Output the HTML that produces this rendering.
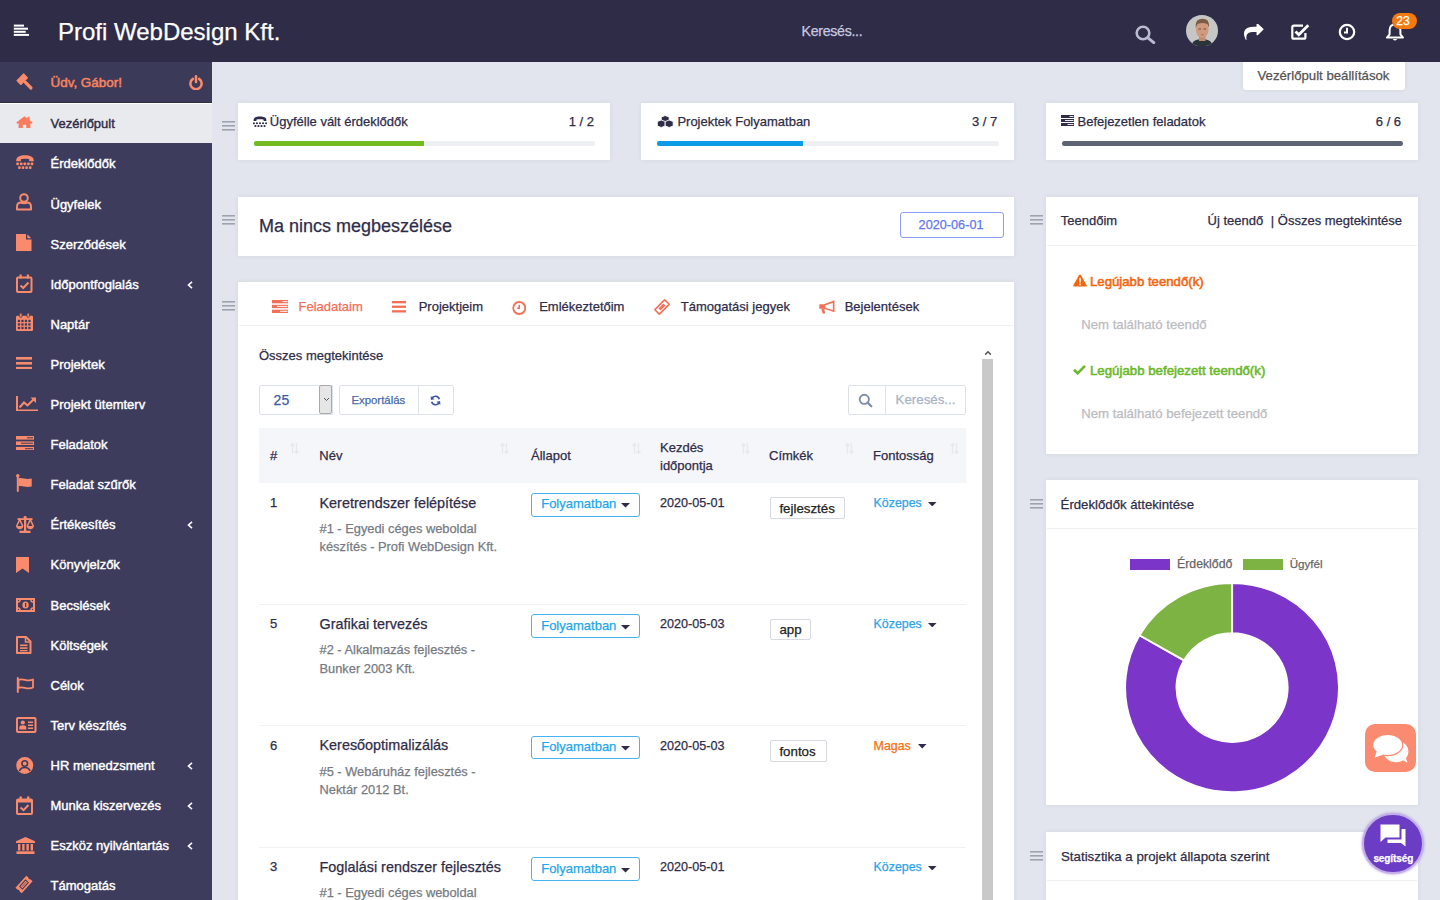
<!DOCTYPE html>
<html><head><meta charset="utf-8">
<style>
*{box-sizing:border-box;margin:0;padding:0}
html,body{width:1440px;height:900px;overflow:hidden}
body{position:relative;background:#e2e5ed;font-family:"Liberation Sans",sans-serif;color:#2f2c48}
.a{position:absolute}
.t{position:absolute;line-height:1;white-space:nowrap;-webkit-text-stroke-width:0.25px}
.sbt{-webkit-text-stroke-width:0.4px}
#hdr{position:absolute;left:0;top:0;width:1440px;height:62px;background:#2f2c48}
#sb{position:absolute;left:0;top:62px;width:212px;height:838px;background:#3d3c5c}
.card{position:absolute;background:#fff;box-shadow:0 0 5px rgba(30,40,60,0.07)}
.si{position:absolute;left:0;width:212px;height:40.1px}
.si .ic{position:absolute;left:15px;top:11px;width:20px;height:18px}
.si .tx{position:absolute;left:50.5px;top:13.5px;font-size:13px;line-height:1;color:#fff;white-space:nowrap;font-weight:400}
.si .ch{position:absolute;left:186px;top:15px;width:6px;height:10px}
</style></head><body>
<div id="hdr">
  <!-- hamburger -->
  <svg class="a" style="left:13px;top:24px" width="17" height="13" viewBox="0 0 17 13"><rect x="0.8" y="0.6" width="10.2" height="2" fill="#fff"/><rect x="0.8" y="3.7" width="14.2" height="2" fill="#fff"/><rect x="0.8" y="6.8" width="11.9" height="2" fill="#fff"/><rect x="0.8" y="9.9" width="15.2" height="2" fill="#fff"/></svg>
  <div class="t" style="left:58px;top:19.7px;font-size:24px;color:#fff">Profi WebDesign Kft.</div>
  <div class="t" style="left:801.5px;top:23.9px;font-size:14.2px;letter-spacing:-0.3px;color:#c7cae0">Keresés...</div>
</div>
<div id="sb"></div>
<!--SB-->
<div class="a" style="left:0;top:62px;width:212px;height:40.5px;background:#3b3a59;border-bottom:1px solid #2e2d47"></div>
<svg class="a" style="left:15.5px;top:73.3px;overflow:visible" width="17" height="17" viewBox="0 0 17 17"><g transform="rotate(-45 8.5 8.5)" fill="#f98a6c"><rect x="3.2" y="2" width="10.6" height="6.6" rx="0.6"/><rect x="6.9" y="8" width="3.2" height="11.2" rx="1.5"/></g></svg>
<div class="t sbt" style="left:50.5px;top:76.3px;font-size:13.45px;color:#f9845f;-webkit-text-stroke-width:0.5px">Üdv, Gábor!</div>
<svg class="a" style="left:189px;top:75px" width="14" height="15" viewBox="0 0 14 15"><path d="M3.9 3.9 A5.6 5.6 0 1 0 10.1 3.9" fill="none" stroke="#f98a6c" stroke-width="2.5" stroke-linecap="round"/><path d="M7 1.3 L7 7" stroke="#f98a6c" stroke-width="2.5" stroke-linecap="round"/></svg>
<div class="a" style="left:0;top:102.8px;width:212px;height:40.2px;background:#e9eaee;border-top:1.5px solid #fff"></div>
<div class="t sbt" style="left:50.5px;top:117.3px;font-size:13px;color:#2f2c48">Vezérlőpult</div>
<svg class="a" style="left:16px;top:115.5px" width="17" height="12.5" viewBox="0 0 17 12.5"><path d="M8.5 0.3 L0.3 6.6 L1.6 8 L2.6 7.2 L2.6 12.5 L6.8 12.5 L6.8 8.8 L10.2 8.8 L10.2 12.5 L14.4 12.5 L14.4 7.2 L15.4 8 L16.7 6.6 L13.5 4.1 L13.5 0.8 L11.4 0.8 L11.4 2.5 Z" fill="#fa7b5e"/></svg>
<div class="t sbt" style="left:50.5px;top:157.4px;font-size:13px;color:#ffffff">Érdeklődők</div>
<svg class="a" style="left:15.9px;top:154.6px" width="18" height="14" viewBox="0 0 18 14"><path d="M0.2 5.6 C0.2 1.5 4 0.2 9 0.2 C14 0.2 17.8 1.5 17.8 5.6 L17.8 6.2 L13.2 6.2 L13.2 4.4 C12 3.6 6 3.6 4.8 4.4 L4.8 6.2 L0.2 6.2 Z" fill="#f98a6c"/><g fill="#f98a6c"><rect x="0.30" y="7.4" width="2.6" height="2.8" rx="0.8"/><rect x="3.90" y="7.4" width="2.6" height="2.8" rx="0.8"/><rect x="7.50" y="7.4" width="2.6" height="2.8" rx="0.8"/><rect x="11.10" y="7.4" width="2.6" height="2.8" rx="0.8"/><rect x="14.70" y="7.4" width="2.6" height="2.8" rx="0.8"/><rect x="2.10" y="11.2" width="2.6" height="2.8" rx="0.8"/><rect x="5.70" y="11.2" width="2.6" height="2.8" rx="0.8"/><rect x="9.30" y="11.2" width="2.6" height="2.8" rx="0.8"/><rect x="12.90" y="11.2" width="2.6" height="2.8" rx="0.8"/></g></svg>
<div class="t sbt" style="left:50.5px;top:197.5px;font-size:13px;color:#ffffff">Ügyfelek</div>
<svg class="a" style="left:16px;top:193px" width="16" height="17.5" viewBox="0 0 16 17.5"><circle cx="8" cy="5" r="3.8" fill="none" stroke="#f98a6c" stroke-width="2"/><path d="M1 16.5 L1 14 C1 11 3 9.6 5 9.6 C6 10.3 10 10.3 11 9.6 C13 9.6 15 11 15 14 L15 16.5 Z" fill="none" stroke="#f98a6c" stroke-width="2" stroke-linejoin="round"/></svg>
<div class="t sbt" style="left:50.5px;top:237.6px;font-size:13px;color:#ffffff">Szerződések</div>
<svg class="a" style="left:16px;top:233.5px" width="15.5" height="17.5" viewBox="0 0 15.5 17.5"><path d="M0 0 L10 0 L10 5.5 L15.5 5.5 L15.5 17.5 L0 17.5 Z" fill="#f98a6c"/><path d="M11.3 0.3 L15.2 4.2 L11.3 4.2 Z" fill="#f98a6c"/></svg>
<div class="t sbt" style="left:50.5px;top:277.7px;font-size:13px;color:#ffffff">Időpontfoglalás</div>
<svg class="a" style="left:16px;top:274px" width="16.5" height="19" viewBox="0 0 16.5 19"><rect x="1" y="3.5" width="14.5" height="14.5" rx="1" fill="none" stroke="#f98a6c" stroke-width="2"/><rect x="3.5" y="0.5" width="2.2" height="4" fill="#f98a6c"/><rect x="10.8" y="0.5" width="2.2" height="4" fill="#f98a6c"/><path d="M4.5 11.5 L7.2 14 L12.5 8.5" fill="none" stroke="#f98a6c" stroke-width="2"/></svg>
<svg class="a" style="left:187px;top:280.5px" width="6" height="8" viewBox="0 0 6 8"><path d="M5 0.8 L1.5 4 L5 7.2" fill="none" stroke="#fff" stroke-width="1.6"/></svg>
<div class="t sbt" style="left:50.5px;top:317.8px;font-size:13px;color:#ffffff">Naptár</div>
<svg class="a" style="left:16px;top:313px" width="17" height="18" viewBox="0 0 17 18"><rect x="0" y="2.8" width="17" height="15.2" rx="1.2" fill="#f98a6c"/><rect x="1.8" y="6.8" width="2.3" height="2.3" fill="#3d3c5c"/><rect x="5.3" y="6.8" width="2.3" height="2.3" fill="#3d3c5c"/><rect x="8.8" y="6.8" width="2.3" height="2.3" fill="#3d3c5c"/><rect x="12.3" y="6.8" width="2.3" height="2.3" fill="#3d3c5c"/><rect x="1.8" y="10.3" width="2.3" height="2.3" fill="#3d3c5c"/><rect x="5.3" y="10.3" width="2.3" height="2.3" fill="#3d3c5c"/><rect x="8.8" y="10.3" width="2.3" height="2.3" fill="#3d3c5c"/><rect x="12.3" y="10.3" width="2.3" height="2.3" fill="#3d3c5c"/><rect x="1.8" y="13.8" width="2.3" height="2.3" fill="#3d3c5c"/><rect x="5.3" y="13.8" width="2.3" height="2.3" fill="#3d3c5c"/><rect x="8.8" y="13.8" width="2.3" height="2.3" fill="#3d3c5c"/><rect x="12.3" y="13.8" width="2.3" height="2.3" fill="#3d3c5c"/><rect x="3.6" y="0" width="2.4" height="4.4" rx="1" fill="#f98a6c" stroke="#3d3c5c" stroke-width="0.8"/><rect x="11" y="0" width="2.4" height="4.4" rx="1" fill="#f98a6c" stroke="#3d3c5c" stroke-width="0.8"/></svg>
<div class="t sbt" style="left:50.5px;top:357.9px;font-size:13px;color:#ffffff">Projektek</div>
<svg class="a" style="left:16px;top:356.5px" width="16" height="12.5" viewBox="0 0 16 12.5"><rect x="0" y="0" width="16" height="2.6" fill="#f98a6c"/><rect x="0" y="5" width="16" height="2.6" fill="#f98a6c"/><rect x="0" y="9.9" width="16" height="2.6" fill="#f98a6c"/></svg>
<div class="t sbt" style="left:50.5px;top:398.0px;font-size:13px;color:#ffffff">Projekt ütemterv</div>
<svg class="a" style="left:16px;top:395.5px" width="22.5" height="15.5" viewBox="0 0 22.5 15.5"><path d="M1 0 L1 14.5 L22 14.5" fill="none" stroke="#f98a6c" stroke-width="2"/><path d="M3.5 11.5 L8 6.5 L11.5 9.5 L18 3" fill="none" stroke="#f98a6c" stroke-width="2"/><path d="M14.5 1.5 L20 1.5 L20 7 Z" fill="#f98a6c"/></svg>
<div class="t sbt" style="left:50.5px;top:438.1px;font-size:13px;color:#ffffff">Feladatok</div>
<svg class="a" style="left:16px;top:435.5px" width="18" height="14.5" viewBox="0 0 18 14.5"><rect x="0" y="0" width="18" height="3.6" fill="#f98a6c"/><rect x="0" y="5.4" width="18" height="3.6" fill="#f98a6c"/><rect x="0" y="10.9" width="18" height="3.6" fill="#f98a6c"/><rect x="11" y="1.3" width="6" height="1" fill="#3d3c5c"/><rect x="5" y="6.7" width="12" height="1" fill="#3d3c5c"/><rect x="9" y="12.2" width="8" height="1" fill="#3d3c5c"/></svg>
<div class="t sbt" style="left:50.5px;top:478.2px;font-size:13px;color:#ffffff">Feladat szűrők</div>
<svg class="a" style="left:16px;top:474.3px" width="16" height="18" viewBox="0 0 16 18"><circle cx="1.8" cy="1.8" r="1.8" fill="#f98a6c"/><rect x="0.8" y="2" width="2" height="16" rx="1" fill="#f98a6c"/><path d="M2.5 4.5 C6 3 9 6 15.7 4.5 L15.7 12.5 C9 14 6 11 2.5 12.5 Z" fill="#f98a6c"/></svg>
<div class="t sbt" style="left:50.5px;top:518.3px;font-size:13px;color:#ffffff">Értékesítés</div>
<svg class="a" style="left:16px;top:515.5px" width="18" height="17" viewBox="0 0 18 17"><rect x="8" y="0.5" width="2.2" height="15" fill="#f98a6c"/><rect x="3.5" y="14.7" width="11" height="2.3" fill="#f98a6c"/><rect x="1.5" y="2.2" width="15" height="1.8" fill="#f98a6c"/><circle cx="9.1" cy="1.6" r="1.6" fill="#f98a6c"/><path d="M0.6 10.3 L3.7 3.6 L6.8 10.3" fill="none" stroke="#f98a6c" stroke-width="1.5"/><path d="M11.2 10.3 L14.3 3.6 L17.4 10.3" fill="none" stroke="#f98a6c" stroke-width="1.5"/><path d="M0 10 L7.4 10 Q6.5 13.2 3.7 13.2 Q0.9 13.2 0 10 Z M10.6 10 L18 10 Q17.1 13.2 14.3 13.2 Q11.5 13.2 10.6 10 Z" fill="#f98a6c"/></svg>
<svg class="a" style="left:187px;top:521.1px" width="6" height="8" viewBox="0 0 6 8"><path d="M5 0.8 L1.5 4 L5 7.2" fill="none" stroke="#fff" stroke-width="1.6"/></svg>
<div class="t sbt" style="left:50.5px;top:558.4px;font-size:13px;color:#ffffff">Könyvjelzők</div>
<svg class="a" style="left:16px;top:556.5px" width="13" height="16" viewBox="0 0 13 16"><path d="M0 0 L13 0 L13 16 L6.5 11.5 L0 16 Z" fill="#f98a6c"/></svg>
<div class="t sbt" style="left:50.5px;top:598.5px;font-size:13px;color:#ffffff">Becslések</div>
<svg class="a" style="left:16px;top:597.5px" width="19" height="14" viewBox="0 0 19 14"><rect x="1" y="1" width="17" height="12" fill="none" stroke="#f98a6c" stroke-width="2"/><ellipse cx="9.5" cy="7" rx="3.2" ry="3.6" fill="#f98a6c"/><rect x="9" y="5" width="1.2" height="4" fill="#3d3c5c"/><path d="M2 4 Q4 4 4 2 M15 2 Q15 4 17 4 M2 10 Q4 10 4 12 M15 12 Q15 10 17 10" fill="none" stroke="#f98a6c" stroke-width="1.5"/></svg>
<div class="t sbt" style="left:50.5px;top:638.6px;font-size:13px;color:#ffffff">Költségek</div>
<svg class="a" style="left:16px;top:635.5px" width="15.5" height="18" viewBox="0 0 15.5 18"><path d="M1 1 L10 1 L14.5 5.5 L14.5 17 L1 17 Z" fill="none" stroke="#f98a6c" stroke-width="2" stroke-linejoin="round"/><path d="M9.5 1 L9.5 6 L14.5 6" fill="none" stroke="#f98a6c" stroke-width="1.5"/><rect x="4" y="8.5" width="7.5" height="1.6" fill="#f98a6c"/><rect x="4" y="11.3" width="7.5" height="1.6" fill="#f98a6c"/><rect x="4" y="14" width="7.5" height="1.3" fill="#f98a6c"/></svg>
<div class="t sbt" style="left:50.5px;top:678.7px;font-size:13px;color:#ffffff">Célok</div>
<svg class="a" style="left:16px;top:676.5px" width="18" height="16" viewBox="0 0 18 16"><rect x="0.8" y="0" width="2" height="16" rx="1" fill="#f98a6c"/><path d="M2.5 3 C7 0.5 11 5.5 17 2.5 L17 10.5 C11 13.5 7 8.5 2.5 11 Z" fill="none" stroke="#f98a6c" stroke-width="1.8" stroke-linejoin="round"/></svg>
<div class="t sbt" style="left:50.5px;top:718.8px;font-size:13px;color:#ffffff">Terv készítés</div>
<svg class="a" style="left:16px;top:716.5px" width="20.5" height="16" viewBox="0 0 20.5 16"><rect x="1" y="1" width="18.5" height="14" rx="1" fill="none" stroke="#f98a6c" stroke-width="2"/><circle cx="6.8" cy="5.5" r="2.1" fill="#f98a6c"/><path d="M3.3 12.5 L3.3 10.5 Q3.3 8.2 6.8 8.2 Q10.3 8.2 10.3 10.5 L10.3 12.5 Z" fill="#f98a6c"/><rect x="12" y="4.5" width="5" height="1.5" fill="#f98a6c"/><rect x="12" y="7.5" width="5" height="1.5" fill="#f98a6c"/><rect x="12" y="10.5" width="5" height="1.5" fill="#f98a6c"/></svg>
<div class="t sbt" style="left:50.5px;top:758.9px;font-size:13px;color:#ffffff">HR menedzsment</div>
<svg class="a" style="left:16px;top:756.5px" width="17.5" height="17" viewBox="0 0 17.5 17"><circle cx="8.75" cy="8.5" r="8.5" fill="#f98a6c"/><circle cx="8.75" cy="6.5" r="2.8" fill="none" stroke="#3d3c5c" stroke-width="1.6"/><path d="M3.5 14 Q4.5 10.5 8.75 10.5 Q13 10.5 14 14" fill="none" stroke="#3d3c5c" stroke-width="1.6"/></svg>
<svg class="a" style="left:187px;top:761.7px" width="6" height="8" viewBox="0 0 6 8"><path d="M5 0.8 L1.5 4 L5 7.2" fill="none" stroke="#fff" stroke-width="1.6"/></svg>
<div class="t sbt" style="left:50.5px;top:799.0px;font-size:13px;color:#ffffff">Munka kiszervezés</div>
<svg class="a" style="left:16px;top:795.5px" width="17" height="19" viewBox="0 0 17 19"><rect x="1" y="3.5" width="15" height="14.5" rx="1" fill="none" stroke="#f98a6c" stroke-width="2"/><rect x="1" y="3.5" width="15" height="3" fill="#f98a6c"/><rect x="3.5" y="0.3" width="2.4" height="4.2" rx="1" fill="#f98a6c"/><rect x="11" y="0.3" width="2.4" height="4.2" rx="1" fill="#f98a6c"/><path d="M4.5 11.5 L7.5 14.2 L12.5 9" fill="none" stroke="#f98a6c" stroke-width="2"/></svg>
<svg class="a" style="left:187px;top:801.8px" width="6" height="8" viewBox="0 0 6 8"><path d="M5 0.8 L1.5 4 L5 7.2" fill="none" stroke="#fff" stroke-width="1.6"/></svg>
<div class="t sbt" style="left:50.5px;top:839.1px;font-size:13px;color:#ffffff">Eszköz nyilvántartás</div>
<svg class="a" style="left:16px;top:836.5px" width="19" height="17" viewBox="0 0 19 17"><path d="M0 4.3 L9.5 0 L19 4.3 L19 6 L0 6 Z" fill="#f98a6c"/><rect x="2" y="7" width="2.4" height="6.5" fill="#f98a6c"/><rect x="6.2" y="7" width="2.4" height="6.5" fill="#f98a6c"/><rect x="10.4" y="7" width="2.4" height="6.5" fill="#f98a6c"/><rect x="14.6" y="7" width="2.4" height="6.5" fill="#f98a6c"/><rect x="0.5" y="14.3" width="18" height="2.7" fill="#f98a6c"/></svg>
<svg class="a" style="left:187px;top:841.9px" width="6" height="8" viewBox="0 0 6 8"><path d="M5 0.8 L1.5 4 L5 7.2" fill="none" stroke="#fff" stroke-width="1.6"/></svg>
<div class="t sbt" style="left:50.5px;top:879.2px;font-size:13px;color:#ffffff">Támogatás</div>
<svg class="a" style="left:15px;top:875.5px;overflow:visible" width="18" height="17" viewBox="0 0 20 17"><g transform="rotate(-48 10 8.5)"><path d="M1 3.8 L19 3.8 L19 6.6 Q17.3 8.5 19 10.4 L19 13.2 L1 13.2 L1 10.4 Q2.7 8.5 1 6.6 Z" fill="#f98a6c"/><rect x="5.2" y="6.4" width="9.6" height="4.2" fill="none" stroke="#3d3c5c" stroke-width="1.1"/><rect x="6.6" y="7.6" width="6.8" height="1.8" fill="#3d3c5c" opacity="0.35"/></g></svg>
<!--/SB-->
<!--M1-->
<!-- handles -->
<svg class="a" style="left:222px;top:119.5px" width="13" height="12" viewBox="0 0 13 12"><rect y="1" width="13" height="1.6" fill="#9ea3af"/><rect y="5" width="13" height="1.6" fill="#9ea3af"/><rect y="9" width="13" height="1.6" fill="#9ea3af"/></svg>
<svg class="a" style="left:222px;top:213.5px" width="13" height="12" viewBox="0 0 13 12"><rect y="1" width="13" height="1.6" fill="#9ea3af"/><rect y="5" width="13" height="1.6" fill="#9ea3af"/><rect y="9" width="13" height="1.6" fill="#9ea3af"/></svg>
<svg class="a" style="left:222px;top:299.5px" width="13" height="12" viewBox="0 0 13 12"><rect y="1" width="13" height="1.6" fill="#9ea3af"/><rect y="5" width="13" height="1.6" fill="#9ea3af"/><rect y="9" width="13" height="1.6" fill="#9ea3af"/></svg>
<svg class="a" style="left:1030px;top:213.5px" width="13" height="12" viewBox="0 0 13 12"><rect y="1" width="13" height="1.6" fill="#9ea3af"/><rect y="5" width="13" height="1.6" fill="#9ea3af"/><rect y="9" width="13" height="1.6" fill="#9ea3af"/></svg>
<svg class="a" style="left:1030px;top:497.5px" width="13" height="12" viewBox="0 0 13 12"><rect y="1" width="13" height="1.6" fill="#9ea3af"/><rect y="5" width="13" height="1.6" fill="#9ea3af"/><rect y="9" width="13" height="1.6" fill="#9ea3af"/></svg>
<svg class="a" style="left:1030px;top:849.5px" width="13" height="12" viewBox="0 0 13 12"><rect y="1" width="13" height="1.6" fill="#9ea3af"/><rect y="5" width="13" height="1.6" fill="#9ea3af"/><rect y="9" width="13" height="1.6" fill="#9ea3af"/></svg>

<!-- settings button -->
<div class="a card" style="left:1242.5px;top:62px;width:162.5px;height:27.6px;border-radius:0 0 3px 3px"></div>
<div class="t" style="left:1257.5px;top:68.6px;font-size:13.2px;color:#535353">Vezérlőpult beállítások</div>

<!-- stat cards -->
<div class="a card" style="left:238.3px;top:102.5px;width:371.5px;height:57.7px"></div>
<div class="a card" style="left:641.3px;top:102.5px;width:373px;height:57.7px"></div>
<div class="a card" style="left:1046.2px;top:102.5px;width:371.6px;height:57.7px"></div>

<div class="t" style="left:269.8px;top:115px;font-size:13px;color:#2f2c48">Ügyfélle vált érdeklődők</div>
<div class="t" style="left:568.7px;top:115px;font-size:13px;color:#2f2c48">1 / 2</div>
<div class="a" style="left:253.7px;top:141.2px;width:341px;height:4.4px;background:#eff0f3;border-radius:2px"></div>
<div class="a" style="left:253.7px;top:141.2px;width:170px;height:4.4px;background:#74bb22;border-radius:2px 0 0 2px"></div>

<div class="t" style="left:677.4px;top:115px;font-size:13px;color:#2f2c48">Projektek Folyamatban</div>
<div class="t" style="left:972px;top:115px;font-size:13px;color:#2f2c48">3 / 7</div>
<div class="a" style="left:657.3px;top:141.2px;width:341.7px;height:4.4px;background:#eff0f3;border-radius:2px"></div>
<div class="a" style="left:657.3px;top:141.2px;width:146px;height:4.4px;background:#0b9ce8;border-radius:2px 0 0 2px"></div>

<div class="t" style="left:1077.5px;top:115px;font-size:13px;color:#2f2c48">Befejezetlen feladatok</div>
<div class="t" style="left:1375.8px;top:115px;font-size:13px;color:#2f2c48">6 / 6</div>
<div class="a" style="left:1061.7px;top:141px;width:341px;height:4.6px;background:#5f6475;border-radius:2.3px"></div>

<!-- meeting card -->
<div class="a card" style="left:238.3px;top:196.5px;width:776px;height:59.5px"></div>
<div class="t" style="left:259px;top:217.3px;font-size:18px;color:#2f2c48">Ma nincs megbeszélése</div>
<div class="a" style="left:900px;top:212px;width:103.5px;height:25.5px;border:1.5px solid #8d9df4;border-radius:3px"></div>
<div class="t" style="left:918.6px;top:219px;font-size:12.7px;color:#6078ea">2020-06-01</div>

<!-- todo card -->
<div class="a card" style="left:1046.3px;top:196.5px;width:371.7px;height:257px"></div>
<div class="a" style="left:1047px;top:245px;width:370px;height:1px;background:#eef0f3"></div>
<div class="t" style="left:1060.8px;top:214px;font-size:13px;color:#2f2c48">Teendőim</div>
<div class="t" style="left:1207.5px;top:214px;font-size:13px;color:#2f2c48">Új teendő</div>
<div class="t" style="left:1270.8px;top:214px;font-size:13px;color:#2f2c48">| Összes megtekintése</div>

<!--/M1-->
<!--M2-->
<!-- task panel -->
<div class="a card" style="left:238.3px;top:282.2px;width:776px;height:640px"></div>
<div class="a" style="left:239px;top:325px;width:774px;height:1px;background:#eef0f3"></div>
<!-- tabs -->
<svg class="a" style="left:271.5px;top:299.8px" width="16.5" height="13" viewBox="0 0 16.5 13"><rect x="0" y="0" width="16.5" height="3.3" fill="#f36f56"/><rect x="0" y="4.8" width="16.5" height="3.3" fill="#f36f56"/><rect x="0" y="9.7" width="16.5" height="3.3" fill="#f36f56"/><rect x="10.5" y="1.1" width="5" height="1" fill="#fff"/><rect x="5" y="5.9" width="10.5" height="1" fill="#fff"/><rect x="8" y="10.8" width="7.5" height="1" fill="#fff"/></svg>
<div class="t" style="left:298.5px;top:300px;font-size:13px;color:#f36f56">Feladataim</div>
<svg class="a" style="left:391.8px;top:301px" width="14" height="11.5" viewBox="0 0 14 11.5"><rect x="0" y="0" width="14" height="2.3" fill="#f36f56"/><rect x="0" y="4.6" width="14" height="2.3" fill="#f36f56"/><rect x="0" y="9.2" width="14" height="2.3" fill="#f36f56"/></svg>
<div class="t" style="left:418.7px;top:300px;font-size:13px;color:#2f2c48">Projektjeim</div>
<svg class="a" style="left:511.8px;top:300.6px" width="14.5" height="14" viewBox="0 0 14.5 14"><circle cx="7.25" cy="7" r="6" fill="none" stroke="#f36f56" stroke-width="1.8"/><path d="M7.25 3.8 L7.25 7.3 L5 7.3" fill="none" stroke="#f36f56" stroke-width="1.6"/></svg>
<div class="t" style="left:539.2px;top:300px;font-size:13px;color:#2f2c48">Emlékeztetőim</div>
<svg class="a" style="left:654px;top:298.5px" width="16" height="16" viewBox="0 0 16 16"><g transform="rotate(-45 8 8)"><rect x="1" y="4.8" width="14" height="6.4" rx="0.5" fill="none" stroke="#f36f56" stroke-width="1.6"/><rect x="4.5" y="6.6" width="7" height="2.8" fill="#f36f56"/></g></svg>
<div class="t" style="left:680.8px;top:300px;font-size:13px;color:#2f2c48">Támogatási jegyek</div>
<svg class="a" style="left:818.5px;top:300px" width="16.5" height="14" viewBox="0 0 16.5 14"><path d="M0.3 4.3 L5 4.3 L15.5 0.3 L15.5 12.3 L5 8.8 L0.3 8.8 Z" fill="#f36f56"/><path d="M6.3 5.4 L13.8 2.7 L13.8 9.9 L6.3 7.7 Z" fill="#fff"/><path d="M2.2 8.5 L3.6 13.6 L6.2 13.6 L5.3 8.7 Z" fill="#f36f56"/></svg>
<div class="t" style="left:844.7px;top:300px;font-size:13px;color:#2f2c48">Bejelentések</div>

<!-- toolbar -->
<div class="t" style="left:259px;top:349.4px;font-size:13px;color:#2f2c48">Összes megtekintése</div>
<div class="a" style="left:259px;top:384.6px;width:74px;height:30.2px;border:1px solid #dde2ea;border-radius:2px 0 0 2px;background:#fff"></div>
<div class="a" style="left:319.4px;top:385.4px;width:13px;height:28.6px;background:#e6e6e6;border:1px solid #a9a9a9;border-radius:2px"></div>
<svg class="a" style="left:322.5px;top:397px" width="7" height="5" viewBox="0 0 7 5"><path d="M1 1 L3.5 3.5 L6 1" fill="none" stroke="#555" stroke-width="1"/></svg>
<div class="t" style="left:273.6px;top:393.2px;font-size:14px;color:#3d5a9e">25</div>
<div class="a" style="left:338.6px;top:384.6px;width:115px;height:30.2px;border:1px solid #dde2ea;border-radius:2px;background:#fff"></div>
<div class="a" style="left:418.3px;top:385px;width:1px;height:29.4px;background:#dde2ea"></div>
<div class="t" style="left:351.4px;top:395px;font-size:11.4px;color:#4a6aa5">Exportálás</div>
<svg class="a" style="left:429.5px;top:395px" width="11" height="11" viewBox="0 0 11 11"><path d="M9.3 4.2 A4 4 0 0 0 1.8 3.6" fill="none" stroke="#3d5a9e" stroke-width="1.7"/><path d="M0.6 1 L0.9 5 L4.6 4.3 Z" fill="#3d5a9e"/><path d="M1.7 6.8 A4 4 0 0 0 9.2 7.4" fill="none" stroke="#3d5a9e" stroke-width="1.7"/><path d="M10.4 10 L10.1 6 L6.4 6.7 Z" fill="#3d5a9e"/></svg>
<div class="a" style="left:847.5px;top:384.6px;width:118.2px;height:30.2px;border:1px solid #dde2ea;border-radius:2px;background:#fff"></div>
<div class="a" style="left:884.5px;top:385px;width:1px;height:29.4px;background:#dde2ea"></div>
<svg class="a" style="left:858px;top:392.5px" width="15" height="15" viewBox="0 0 15 15"><circle cx="6.3" cy="6.3" r="4.6" fill="none" stroke="#7e8ea8" stroke-width="1.9"/><path d="M9.6 9.6 L13.3 13.3" stroke="#7e8ea8" stroke-width="2.2" stroke-linecap="round"/></svg>
<div class="t" style="left:895.6px;top:393.2px;font-size:13.3px;color:#a8b3c6">Keresés...</div>

<!-- scrollbar -->
<div class="a" style="left:982px;top:345px;width:11.4px;height:560px;background:#fff"></div>
<div class="a" style="left:982.2px;top:359px;width:11px;height:545px;background:#c9c9c9"></div>
<svg class="a" style="left:983.7px;top:350.3px" width="8" height="6" viewBox="0 0 8 6"><path d="M1.2 4.6 L4 1.8 L6.8 4.6" fill="none" stroke="#555" stroke-width="1.5"/></svg>

<!-- table header -->
<div class="a" style="left:259px;top:428px;width:706.7px;height:55px;background:#f5f6f9"></div>
<svg class="a" style="left:289.5px;top:442px" width="9" height="13" viewBox="0 0 9 13"><path d="M2.5 12 L2.5 2 M0.5 4 L2.5 1.5 L4.5 4" fill="none" stroke="#e6e8ee" stroke-width="1.3"/><path d="M6.5 1 L6.5 11 M4.5 9 L6.5 11.5 L8.5 9" fill="none" stroke="#e6e8ee" stroke-width="1.3"/></svg><svg class="a" style="left:500px;top:442px" width="9" height="13" viewBox="0 0 9 13"><path d="M2.5 12 L2.5 2 M0.5 4 L2.5 1.5 L4.5 4" fill="none" stroke="#e6e8ee" stroke-width="1.3"/><path d="M6.5 1 L6.5 11 M4.5 9 L6.5 11.5 L8.5 9" fill="none" stroke="#e6e8ee" stroke-width="1.3"/></svg><svg class="a" style="left:632px;top:442px" width="9" height="13" viewBox="0 0 9 13"><path d="M2.5 12 L2.5 2 M0.5 4 L2.5 1.5 L4.5 4" fill="none" stroke="#e6e8ee" stroke-width="1.3"/><path d="M6.5 1 L6.5 11 M4.5 9 L6.5 11.5 L8.5 9" fill="none" stroke="#e6e8ee" stroke-width="1.3"/></svg><svg class="a" style="left:741px;top:442px" width="9" height="13" viewBox="0 0 9 13"><path d="M2.5 12 L2.5 2 M0.5 4 L2.5 1.5 L4.5 4" fill="none" stroke="#e6e8ee" stroke-width="1.3"/><path d="M6.5 1 L6.5 11 M4.5 9 L6.5 11.5 L8.5 9" fill="none" stroke="#e6e8ee" stroke-width="1.3"/></svg><svg class="a" style="left:845px;top:442px" width="9" height="13" viewBox="0 0 9 13"><path d="M2.5 12 L2.5 2 M0.5 4 L2.5 1.5 L4.5 4" fill="none" stroke="#e6e8ee" stroke-width="1.3"/><path d="M6.5 1 L6.5 11 M4.5 9 L6.5 11.5 L8.5 9" fill="none" stroke="#e6e8ee" stroke-width="1.3"/></svg><svg class="a" style="left:950px;top:442px" width="9" height="13" viewBox="0 0 9 13"><path d="M2.5 12 L2.5 2 M0.5 4 L2.5 1.5 L4.5 4" fill="none" stroke="#e6e8ee" stroke-width="1.3"/><path d="M6.5 1 L6.5 11 M4.5 9 L6.5 11.5 L8.5 9" fill="none" stroke="#e6e8ee" stroke-width="1.3"/></svg>
<div class="t" style="left:270px;top:449.2px;font-size:13px;color:#2f2c48">#</div>
<div class="t" style="left:319.3px;top:449.2px;font-size:13px;color:#2f2c48">Név</div>
<div class="t" style="left:531px;top:449.2px;font-size:13px;color:#2f2c48">Állapot</div>
<div class="t" style="left:660px;top:440.7px;font-size:13px;color:#2f2c48">Kezdés</div>
<div class="t" style="left:660px;top:459.1px;font-size:13px;color:#2f2c48">időpontja</div>
<div class="t" style="left:769px;top:449.2px;font-size:13px;color:#2f2c48">Címkék</div>
<div class="t" style="left:873px;top:449.2px;font-size:13px;color:#2f2c48">Fontosság</div>

<div class="t" style="left:270px;top:496.0px;font-size:13px;color:#2f2c48">1</div>
<div class="t" style="left:319.5px;top:495.6px;font-size:14.4px;color:#2f2c48">Keretrendszer felépítése</div>
<div class="t" style="left:319.5px;top:522.8px;font-size:12.85px;color:#777a82">#1 - Egyedi céges weboldal</div>
<div class="t" style="left:319.5px;top:541.3px;font-size:12.85px;color:#777a82">készítés - Profi WebDesign Kft.</div>
<div class="a" style="left:531.2px;top:493.0px;width:108.5px;height:23.7px;border:1px solid #45b4f0;border-radius:3px"></div>
<div class="t" style="left:541.2px;top:497.3px;font-size:13px;color:#1ea6ec">Folyamatban</div>
<svg class="a" style="left:621.3px;top:503.3px" width="9" height="5" viewBox="0 0 9 5"><path d="M0 0 L9 0 L4.5 4.6 Z" fill="#2f2c48"/></svg>
<div class="t" style="left:660px;top:497.0px;font-size:12.6px;color:#2f2c48">2020-05-01</div>
<div class="a" style="left:769.6px;top:497.3px;width:75px;height:21.5px;border:1px solid #d6d9df;border-radius:2px"></div>
<div class="t" style="left:779.4px;top:501.8px;font-size:13.3px;color:#222">fejlesztés</div>
<div class="t" style="left:873.6px;top:497.0px;font-size:12.4px;color:#2ba4e8">Közepes</div>
<svg class="a" style="left:928px;top:501.5px" width="8.5" height="4.5" viewBox="0 0 8.5 4.5"><path d="M0 0 L8.5 0 L4.25 4.4 Z" fill="#2f2c48"/></svg>
<div class="a" style="left:259px;top:603.7px;width:706.7px;height:1px;background:#f0f1f4"></div>
<div class="t" style="left:270px;top:617.4px;font-size:13px;color:#2f2c48">5</div>
<div class="t" style="left:319.5px;top:617.0px;font-size:14.4px;color:#2f2c48">Grafikai tervezés</div>
<div class="t" style="left:319.5px;top:644.2px;font-size:12.85px;color:#777a82">#2 - Alkalmazás fejlesztés -</div>
<div class="t" style="left:319.5px;top:662.7px;font-size:12.85px;color:#777a82">Bunker 2003 Kft.</div>
<div class="a" style="left:531.2px;top:614.4px;width:108.5px;height:23.7px;border:1px solid #45b4f0;border-radius:3px"></div>
<div class="t" style="left:541.2px;top:618.7px;font-size:13px;color:#1ea6ec">Folyamatban</div>
<svg class="a" style="left:621.3px;top:624.7px" width="9" height="5" viewBox="0 0 9 5"><path d="M0 0 L9 0 L4.5 4.6 Z" fill="#2f2c48"/></svg>
<div class="t" style="left:660px;top:618.4px;font-size:12.6px;color:#2f2c48">2020-05-03</div>
<div class="a" style="left:769.6px;top:618.7px;width:41.4px;height:21.5px;border:1px solid #d6d9df;border-radius:2px"></div>
<div class="t" style="left:779.4px;top:623.2px;font-size:13.3px;color:#222">app</div>
<div class="t" style="left:873.6px;top:618.4px;font-size:12.4px;color:#2ba4e8">Közepes</div>
<svg class="a" style="left:928px;top:622.9px" width="8.5" height="4.5" viewBox="0 0 8.5 4.5"><path d="M0 0 L8.5 0 L4.25 4.4 Z" fill="#2f2c48"/></svg>
<div class="a" style="left:259px;top:725.1px;width:706.7px;height:1px;background:#f0f1f4"></div>
<div class="t" style="left:270px;top:738.8px;font-size:13px;color:#2f2c48">6</div>
<div class="t" style="left:319.5px;top:738.4px;font-size:14.4px;color:#2f2c48">Keresőoptimalizálás</div>
<div class="t" style="left:319.5px;top:765.6px;font-size:12.85px;color:#777a82">#5 - Webáruház fejlesztés -</div>
<div class="t" style="left:319.5px;top:784.1px;font-size:12.85px;color:#777a82">Nektár 2012 Bt.</div>
<div class="a" style="left:531.2px;top:735.8px;width:108.5px;height:23.7px;border:1px solid #45b4f0;border-radius:3px"></div>
<div class="t" style="left:541.2px;top:740.1px;font-size:13px;color:#1ea6ec">Folyamatban</div>
<svg class="a" style="left:621.3px;top:746.1px" width="9" height="5" viewBox="0 0 9 5"><path d="M0 0 L9 0 L4.5 4.6 Z" fill="#2f2c48"/></svg>
<div class="t" style="left:660px;top:739.8px;font-size:12.6px;color:#2f2c48">2020-05-03</div>
<div class="a" style="left:769.6px;top:740.1px;width:57.4px;height:21.5px;border:1px solid #d6d9df;border-radius:2px"></div>
<div class="t" style="left:779.4px;top:744.6px;font-size:13.3px;color:#222">fontos</div>
<div class="t" style="left:873.6px;top:739.8px;font-size:12.4px;color:#f5700e">Magas</div>
<svg class="a" style="left:918px;top:744.3px" width="8.5" height="4.5" viewBox="0 0 8.5 4.5"><path d="M0 0 L8.5 0 L4.25 4.4 Z" fill="#2f2c48"/></svg>
<div class="a" style="left:259px;top:846.5px;width:706.7px;height:1px;background:#f0f1f4"></div>
<div class="t" style="left:270px;top:860.2px;font-size:13px;color:#2f2c48">3</div>
<div class="t" style="left:319.5px;top:859.8px;font-size:14.4px;color:#2f2c48">Foglalási rendszer fejlesztés</div>
<div class="t" style="left:319.5px;top:887.0px;font-size:12.85px;color:#777a82">#1 - Egyedi céges weboldal</div>
<div class="a" style="left:531.2px;top:857.2px;width:108.5px;height:23.7px;border:1px solid #45b4f0;border-radius:3px"></div>
<div class="t" style="left:541.2px;top:861.5px;font-size:13px;color:#1ea6ec">Folyamatban</div>
<svg class="a" style="left:621.3px;top:867.5px" width="9" height="5" viewBox="0 0 9 5"><path d="M0 0 L9 0 L4.5 4.6 Z" fill="#2f2c48"/></svg>
<div class="t" style="left:660px;top:861.2px;font-size:12.6px;color:#2f2c48">2020-05-01</div>
<div class="t" style="left:873.6px;top:861.2px;font-size:12.4px;color:#2ba4e8">Közepes</div>
<svg class="a" style="left:928px;top:865.7px" width="8.5" height="4.5" viewBox="0 0 8.5 4.5"><path d="M0 0 L8.5 0 L4.25 4.4 Z" fill="#2f2c48"/></svg>
<!--/M2-->
<!--M3-->
<!-- todo content -->
<svg class="a" style="left:1072.5px;top:273.5px" width="14" height="13" viewBox="0 0 14 13"><path d="M7 0.6 Q7.6 0.6 8 1.3 L13.6 11.2 Q14 12.4 12.8 12.4 L1.2 12.4 Q0 12.4 0.4 11.2 L6 1.3 Q6.4 0.6 7 0.6 Z" fill="#f4660e"/><rect x="6.2" y="4" width="1.6" height="4.6" fill="#fff"/><rect x="6.2" y="9.6" width="1.6" height="1.6" fill="#fff"/></svg>
<div class="t" style="left:1090px;top:274.8px;font-size:13.2px;color:#f4660e;-webkit-text-stroke-width:0.55px">Legújabb teendő(k)</div>
<div class="t" style="left:1081.2px;top:317.8px;font-size:13.2px;color:#bbbcc1">Nem található teendő</div>
<svg class="a" style="left:1073px;top:364px" width="13" height="11" viewBox="0 0 13 11"><path d="M1 5.8 L4.6 9.3 L12 1.8" fill="none" stroke="#6ab82b" stroke-width="2.6"/></svg>
<div class="t" style="left:1090px;top:363.8px;font-size:13.25px;color:#6ab82b;-webkit-text-stroke-width:0.55px">Legújabb befejezett teendő(k)</div>
<div class="t" style="left:1081.2px;top:406.9px;font-size:13.2px;color:#bbbcc1">Nem található befejezett teendő</div>

<!-- leads card -->
<div class="a card" style="left:1045.8px;top:479.6px;width:372.2px;height:325px"></div>
<div class="a" style="left:1047px;top:528px;width:370px;height:1px;background:#eef0f3"></div>
<div class="t" style="left:1060.6px;top:497.5px;font-size:13.2px;color:#2f2c48">Érdeklődők áttekintése</div>
<div class="a" style="left:1130px;top:559px;width:40.2px;height:11px;background:#7b35c8"></div>
<div class="t" style="left:1177px;top:557.8px;font-size:12.3px;color:#666">Érdeklődő</div>
<div class="a" style="left:1242.6px;top:559px;width:40.4px;height:11px;background:#7cb342"></div>
<div class="t" style="left:1289.7px;top:557.8px;font-size:11.6px;color:#666">Ügyfél</div>
<svg class="a" style="left:1118.65px;top:577.4px" width="226.1" height="221.2" viewBox="-112 -112 224 224" preserveAspectRatio="none">
  <path d="M0 -106 A106 106 0 1 1 -91.8 -53 L-47.6 -27.5 A55 55 0 1 0 0 -55 Z" fill="#7b35c8" stroke="#fff" stroke-width="2" stroke-linejoin="miter"/>
  <path d="M-91.8 -53 A106 106 0 0 1 0 -106 L0 -55 A55 55 0 0 0 -47.6 -27.5 Z" fill="#7cb342" stroke="#fff" stroke-width="2"/>
</svg>

<!-- stats card -->
<div class="a card" style="left:1046px;top:831.7px;width:372.3px;height:100px"></div>
<div class="a" style="left:1047px;top:880px;width:370px;height:1px;background:#eef0f3"></div>
<div class="t" style="left:1061px;top:849.8px;font-size:13.3px;color:#2f2c48">Statisztika a projekt állapota szerint</div>

<!-- floating chat -->
<div class="a" style="left:1365.1px;top:724.2px;width:50.7px;height:48.2px;background:#fa8a70;border-radius:10px"></div>
<svg class="a" style="left:1365.1px;top:724.2px" width="50.7" height="48.2" viewBox="0 0 50.7 48.2">
  <ellipse cx="31" cy="27.4" rx="12.4" ry="10.9" fill="#fff"/>
  <path d="M36 35 L42.5 38.8 L40.5 33 Z" fill="#fff"/>
  <ellipse cx="22.7" cy="21" rx="15.1" ry="10.6" fill="#fff" stroke="#fa8a70" stroke-width="1.3"/>
  <path d="M11.5 27.5 L9.6 33.8 L18.5 30.6 Z" fill="#fff"/>
</svg>
<div class="a" style="left:1362.3px;top:812.8px;width:61.4px;height:61.4px;border-radius:50%;background:#6b3cc4;border:2px solid #c2aee8;box-shadow:0 0 2px 1px rgba(170,140,225,0.45)"></div>
<svg class="a" style="left:1380px;top:824px" width="26" height="23" viewBox="0 0 26 23">
  <path d="M0.5 0.5 L19.5 0.5 L19.5 13.5 L5.5 13.5 L0.5 18 Z" fill="#fff"/>
  <path d="M21.5 5 L25.5 5 L25.5 22.5 L21 19 L7.5 19 L7.5 15.5 L21.5 15.5 Z" fill="#fff"/>
</svg>
<div class="t" style="left:1373.4px;top:854px;font-size:10px;font-weight:700;color:#fff;letter-spacing:-0.1px">segítség</div>

<!-- stat card icons -->
<svg class="a" style="left:253px;top:115.5px" width="14" height="11.5" viewBox="0 0 14 11.5"><path d="M0.6 4.3 C0.6 1.3 3.5 0.6 7 0.6 C10.5 0.6 13.4 1.3 13.4 4.3 L13.4 5 L10.6 5 L10.6 3.7 C9.5 3.1 4.5 3.1 3.4 3.7 L3.4 5 L0.6 5 Z" fill="#2f2c48"/><g fill="#2f2c48"><circle cx="0.90" cy="7.3" r="1.05"/><circle cx="3.95" cy="7.3" r="1.05"/><circle cx="7.00" cy="7.3" r="1.05"/><circle cx="10.05" cy="7.3" r="1.05"/><circle cx="13.10" cy="7.3" r="1.05"/><circle cx="2.40" cy="10.1" r="1.05"/><circle cx="5.45" cy="10.1" r="1.05"/><circle cx="8.50" cy="10.1" r="1.05"/><circle cx="11.55" cy="10.1" r="1.05"/></g></svg>
<svg class="a" style="left:657px;top:115px" width="16.5" height="13" viewBox="0 0 16.5 13"><g fill="#2f2c48" stroke="#fff" stroke-width="0.9"><path d="M8.2 0.5 L12.2 2 L12.2 6.3 L8.2 7.8 L4.2 6.3 L4.2 2 Z"/><path d="M4.2 5 L8.2 6.5 L8.2 11 L4.2 12.5 L0.3 11 L0.3 6.5 Z"/><path d="M12.2 5 L16.2 6.5 L16.2 11 L12.2 12.5 L8.2 11 L8.2 6.5 Z"/></g></svg>
<svg class="a" style="left:1060.8px;top:115px" width="13.5" height="11" viewBox="0 0 13.5 11"><rect x="0" y="0" width="13.5" height="3" fill="#2f2c48"/><rect x="0" y="4" width="13.5" height="3" fill="#2f2c48"/><rect x="0" y="8" width="13.5" height="3" fill="#2f2c48"/><rect x="8.5" y="1" width="4" height="0.9" fill="#fff"/><rect x="4" y="5" width="8.5" height="0.9" fill="#fff"/><rect x="6.5" y="9" width="6" height="0.9" fill="#fff"/></svg>

<!-- header icons -->
<svg class="a" style="left:1135px;top:24.5px" width="21" height="19" viewBox="0 0 21 19"><circle cx="8" cy="8" r="6.3" fill="none" stroke="#b9bcd0" stroke-width="2.6"/><path d="M12.6 12.6 L18.8 17.6" stroke="#b9bcd0" stroke-width="3" stroke-linecap="round"/></svg>
<svg class="a" style="left:1185.5px;top:14.5px" width="32" height="31.5" viewBox="0 0 32 31.5"><defs><clipPath id="avc"><ellipse cx="16" cy="15.75" rx="16" ry="15.75"/></clipPath></defs><g clip-path="url(#avc)"><rect width="32" height="32" fill="#c6c6c4"/><path d="M5 32 Q6 25.5 12 24.5 L20 24.5 Q26 25.5 27 32 Z" fill="#2b3539"/><rect x="13" y="20" width="6.5" height="6" fill="#c48a70"/><ellipse cx="16.2" cy="14.8" rx="6.3" ry="8.2" fill="#cf9a7e"/><path d="M9.8 13 Q9 6 13 4.5 Q16.5 3.2 20 4.5 Q23.6 6 22.8 12.5 Q22 9 20 8.4 Q16 7.5 12 8.8 Q10.5 10 9.8 13 Z" fill="#7d5b44"/><path d="M12.5 14 L15 14 M17.5 14 L20 14" stroke="#6e4c3c" stroke-width="1"/><path d="M15 19.8 L17.8 19.8" stroke="#a86a58" stroke-width="0.9"/></g></svg>
<svg class="a" style="left:1244px;top:24px" width="19.5" height="16" viewBox="0 128 1792 1536" preserveAspectRatio="none"><path fill="#fff" d="M1792 640q0 26-19 45l-512 512q-19 19-45 19t-45-19-19-45v-256h-224q-98 0-175.5 6t-154 21.5-133 42.5-105.5 69.5-80 101-48.5 138.5-17.5 181q0 55 5 123 0 6 2.5 23.5t2.5 26.5q0 15-8.5 25t-23.5 10q-16 0-28-17-7-9-13-22t-13.5-30-10.5-24q-127-285-127-451 0-199 53-333 162-403 875-403h224v-256q0-26 19-45t45-19 45 19l512 512q19 19 19 45z"/></svg>
<svg class="a" style="left:1291px;top:24px" width="19" height="16" viewBox="0 0 19 16"><path d="M12 1.6 L2.8 1.6 Q1.3 1.6 1.3 3.1 L1.3 13.2 Q1.3 14.7 2.8 14.7 L12.9 14.7 Q14.4 14.7 14.4 13.2 L14.4 9" fill="none" stroke="#fff" stroke-width="2.2"/><path d="M4.5 7.5 L7.8 10.8 L17.3 1.3" fill="none" stroke="#fff" stroke-width="2.8"/></svg>
<svg class="a" style="left:1338px;top:23.3px" width="18" height="18" viewBox="0 0 18 18"><circle cx="9" cy="9" r="7.2" fill="none" stroke="#fff" stroke-width="2.2"/><path d="M9 4.8 L9 9.5 L6 9.5" fill="none" stroke="#fff" stroke-width="2"/></svg>
<svg class="a" style="left:1385.5px;top:22.5px" width="18" height="19" viewBox="0 0 18 19"><path d="M9 1.5 C5.2 1.5 3.6 4.2 3.6 7.5 L3.6 11.3 L1 14.6 L17 14.6 L14.4 11.3 L14.4 7.5 C14.4 4.2 12.8 1.5 9 1.5 Z" fill="none" stroke="#fff" stroke-width="2" stroke-linejoin="round"/><path d="M6.8 16 Q9 19 11.2 16 Z" fill="#fff"/></svg>
<div class="a" style="left:1391.5px;top:12.8px;width:25px;height:16.7px;border-radius:8.3px;background:#f57a0e"></div>
<div class="t" style="left:1396.2px;top:15.2px;font-size:12.2px;color:#fff">23</div>

<!--/M3-->
</body></html>
